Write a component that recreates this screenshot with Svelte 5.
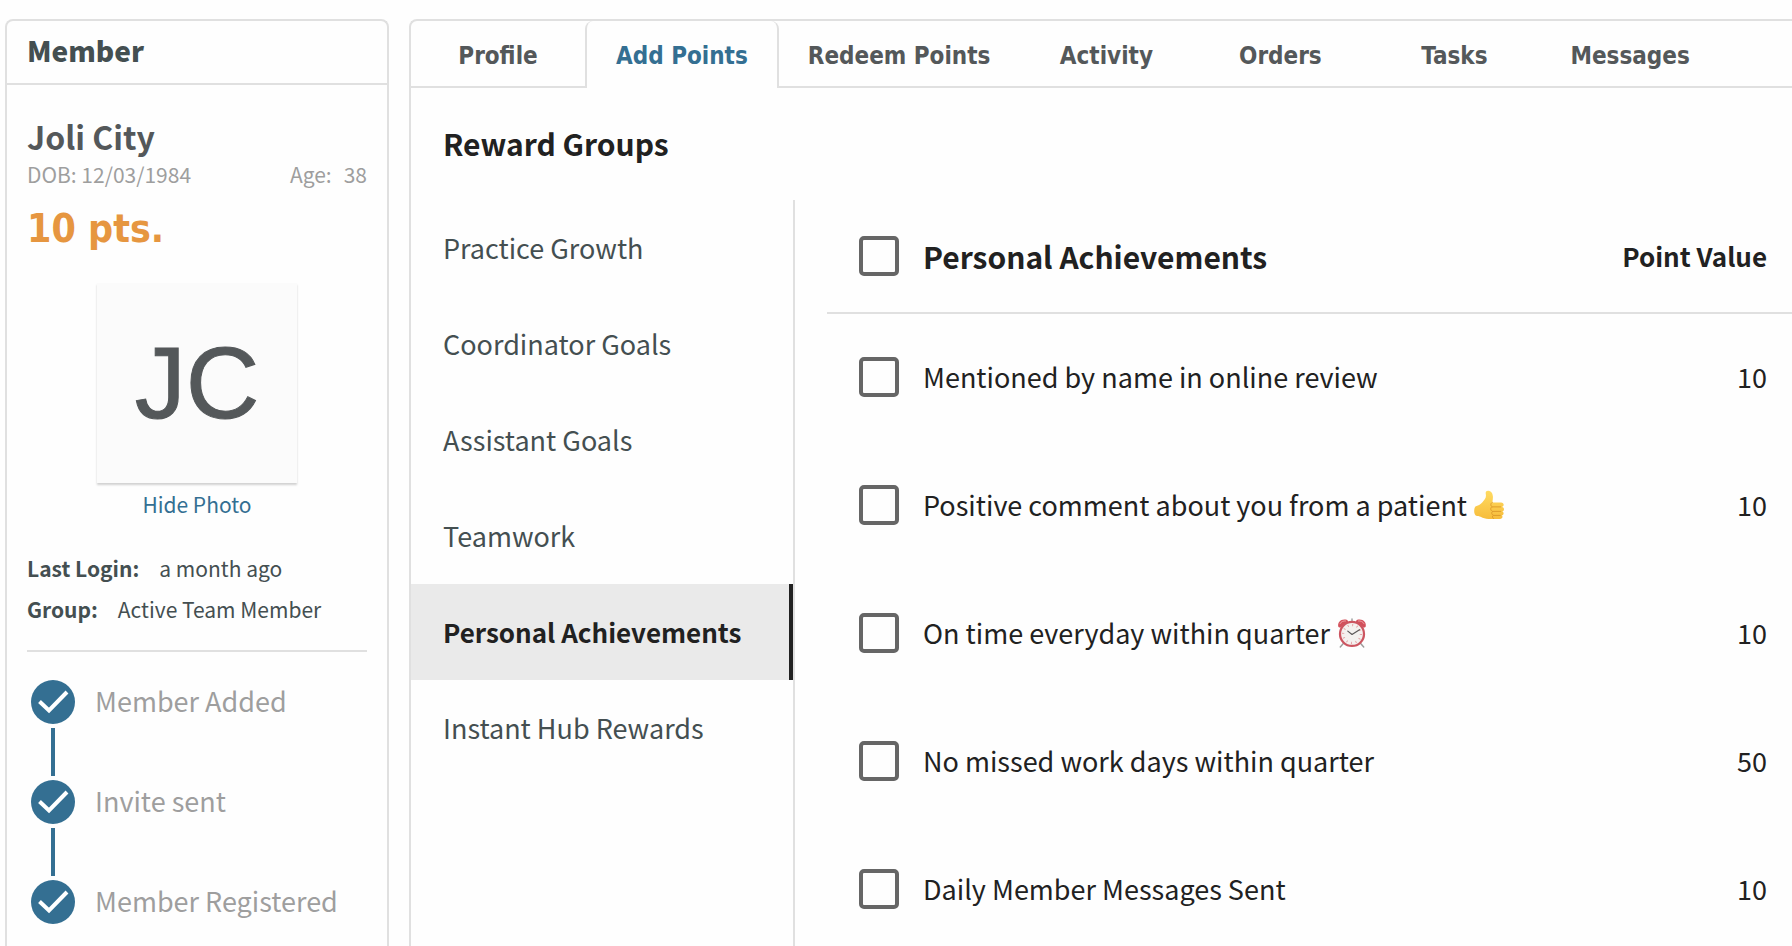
<script>
  const tabs = ['Profile', 'Add Points', 'Redeem Points', 'Activity', 'Orders', 'Tasks', 'Messages'];
  const groups = [
    'Practice Growth',
    'Coordinator Goals',
    'Assistant Goals',
    'Teamwork',
    'Personal Achievements',
    'Instant Hub Rewards'
  ];
  const steps = ['Member Added', 'Invite sent', 'Member Registered'];
  const rewards = [
    { name: 'Mentioned by name in online review', points: 10 },
    { name: 'Positive comment about you from a patient', points: 10, icon: 'thumb' },
    { name: 'On time everyday within quarter', points: 10, icon: 'clock' },
    { name: 'No missed work days within quarter', points: 50 },
    { name: 'Daily Member Messages Sent', points: 10 }
  ];

  let activeTab = $state('Add Points');
  let activeGroup = $state('Personal Achievements');
  let checked = $state([false, false, false, false, false]);
  let all = $derived(checked.every(Boolean));

  function toggleAll(event) {
    checked = checked.map(() => event.currentTarget.checked);
  }
</script>

<div class="layout">
  <aside class="member">
    <h2>Member</h2>
    <div class="body">
      <h1>Joli City</h1>
      <div class="facts"><span>DOB: 12/03/1984</span><span class="age"><span>Age:</span><span>38</span></span></div>
      <p class="points">10 pts.</p>
      <div class="photo">JC</div>
      <button class="hide" type="button">Hide Photo</button>
      <dl>
        <div><dt>Last Login:</dt><dd>a month ago</dd></div>
        <div><dt>Group:</dt><dd>Active Team Member</dd></div>
      </dl>
      <ol>
        {#each steps as step}
          <li>
            <svg viewBox="0 0 44 44" aria-hidden="true">
              <circle cx="22" cy="22" r="22" />
              <path d="M8.500 21.500 18 30.500 36 12" />
            </svg>
            <span>{step}</span>
          </li>
        {/each}
      </ol>
    </div>
  </aside>

  <main>
    <nav>
      {#each tabs as tab}
        <button type="button" class:active={tab === activeTab} onclick={() => (activeTab = tab)}>{tab}</button>
      {/each}
    </nav>
    <h3>Reward Groups</h3>
    <div class="split">
      <div class="groups">
        {#each groups as group}
          <button type="button" class:active={group === activeGroup} onclick={() => (activeGroup = group)}>{group}</button>
        {/each}
      </div>
      <table>
        <thead>
          <tr>
            <th class="tick"><input id="all" type="checkbox" checked={all} onchange={toggleAll} /></th>
            <th class="title"><label for="all">Personal Achievements</label></th>
            <th class="value">Point Value</th>
          </tr>
        </thead>
        <tbody>
          {#each rewards as reward, i}
            <tr>
              <td class="tick"><input id="reward-{i}" type="checkbox" bind:checked={checked[i]} /></td>
              <td>
                <label for="reward-{i}">
                  <span>{reward.name}</span>
                  {#if reward.icon === 'thumb'}
                    <svg class="emoji" viewBox="0 0 32 32" aria-hidden="true">
                      <defs>
                        <linearGradient id="skin" x1="0" y1="0" x2="0" y2="1">
                          <stop offset="0" stop-color="#ffdb62" />
                          <stop offset="1" stop-color="#f7bd3c" />
                        </linearGradient>
                      </defs>
                      <path fill="url(#skin)" d="M1.500 17.500C4 16.500 7 15.500 9 13c2.500-3 4.300-4.800 3.600-8.500C12 1.800 13.300.5 15.300.7c3.500.3 4.900 3.600 4.900 6.800 0 2-.3 4-.7 5.700h9.300c3.500 0 3.700 4.200 1 4.800 3 .4 2.800 4.400.2 4.800 2.400.6 2 4-.5 4.300 1.600.8 1 3.700-1.500 3.700H15.500c-3.500 0-5.500-.8-8.500-2.300-2.500-.6-4.300-.4-5.500-1.500C-.5 24.500 0 19.500 1.500 17.500Z" />
                      <path fill="none" stroke="#dc9a2a" stroke-width="1" stroke-linecap="round" d="M19.500 13.200c-2 .8-2.200 3.600-.3 4.700M28.300 18h-9c-2 .5-2 4 .2 4.700M28.500 22.800h-8.500c-1.700.6-1.500 3.600.5 4.200M28 27.100h-7.500c-1.200.5-1 2.600.2 3.400" />
                    </svg>
                  {:else if reward.icon === 'clock'}
                    <svg class="emoji" viewBox="0 0 32 32" aria-hidden="true">
                      <path stroke="#9b9b9b" stroke-width="1.500" stroke-linecap="round" d="M7 27l-3.500 4M25 27l3.500 4M16 1v3" />
                      <path fill="#d3505b" d="M1.500 9.500C0 4 5 0 11 2l1 2-8.500 6.500ZM30.500 9.500C32 4 27 0 21 2l-1 2 8.500 6.500Z" />
                      <path stroke="#eda0a5" stroke-width="1" fill="none" d="M3 6.500C4 4 7 2.800 9.500 3.200M29 6.500C28 4 25 2.800 22.500 3.200" />
                      <circle cx="16" cy="17" r="12.800" fill="#f4f1ef" stroke="#cc5560" stroke-width="2.400" />
                      <circle cx="16" cy="17" r="9.500" fill="none" stroke="#e3a0a3" stroke-width="2.400" stroke-dasharray="1 3.970" />
                      <path fill="none" stroke="#5b5858" stroke-width="1.300" stroke-linecap="round" stroke-linejoin="round" d="M11.500 14 16 17.500 24 12.500" />
                    </svg>
                  {/if}
                </label>
              </td>
              <td class="value">{reward.points}</td>
            </tr>
          {/each}
        </tbody>
      </table>
    </div>
  </main>
</div>

<style>
  :global(body) {
    background: #fefefe;
    font-family: 'Source Sans Pro', 'Noto Sans CJK SC', sans-serif;
    font-size: 27px;
    color: #212121;
  }
  * {
    box-sizing: border-box;
    margin: 0;
    padding: 0;
  }
  button {
    background: none;
    border: 0;
    font: inherit;
    color: inherit;
    cursor: pointer;
  }
  .layout {
    display: flex;
    gap: 20px;
    min-height: 100vh;
    padding: 19px 0 0 5px;
  }
  .member {
    flex: 0 0 384px;
    border: 2px solid #e0e0e0;
    border-bottom: 0;
    border-radius: 8px 8px 0 0;
    color: #444f51;
  }
  h2 {
    padding: 0 20px 4px;
    border-bottom: 2px solid #e0e0e0;
    font-size: 28px;
    font-weight: 900;
    line-height: 58px;
  }
  .body {
    display: flex;
    flex-direction: column;
    padding: 31px 20px 0;
    font-size: 21px;
  }
  h1 {
    color: #54585a;
    font-size: 32px;
    line-height: 40px;
  }
  .facts {
    display: flex;
    justify-content: space-between;
    color: #9e9e9e;
    line-height: 36px;
  }
  .age {
    display: flex;
    gap: 12px;
  }
  .points {
    margin-top: 13px;
    color: #e69640;
    font-family: Tahoma, 'DejaVu Sans Condensed', 'DejaVu Sans', sans-serif;
    font-stretch: condensed;
    font-size: 39px;
    font-weight: 700;
    line-height: 48px;
  }
  .photo {
    display: grid;
    place-items: center;
    align-self: center;
    width: 200px;
    height: 200px;
    margin-top: 30px;
    background: #fbfbfb;
    box-shadow: 0 2px 2px rgba(0, 0, 0, 0.18);
    color: #54585a;
    font: 102px 'Liberation Sans', sans-serif;
    -webkit-text-stroke: 1px #54585a;
  }
  .hide {
    align-self: center;
    margin-top: 5px;
    color: #346f92;
    line-height: 32px;
  }
  dl {
    margin-top: 28px;
    padding-bottom: 20px;
    border-bottom: 2px solid #e0e0e0;
    line-height: 41px;
  }
  dl div {
    display: flex;
    gap: 20px;
  }
  dt {
    font-weight: 700;
  }
  ol {
    margin-top: 28px;
    list-style: none;
    color: #9e9e9e;
    font-size: 27px;
    line-height: 42px;
  }
  li {
    display: grid;
    grid-template-columns: 44px 1fr;
    column-gap: 20px;
    padding-left: 4px;
  }
  li svg {
    width: 44px;
    height: 44px;
  }
  li circle {
    fill: #346f92;
  }
  li path {
    fill: none;
    stroke: #fff;
    stroke-width: 4;
  }
  li:not(:last-child)::after {
    content: '';
    justify-self: center;
    width: 4px;
    height: 48px;
    margin: 4px 0;
    background: #346f92;
  }
  main {
    flex: 1;
    min-width: 0;
    display: flex;
    flex-direction: column;
    border: solid #e0e0e0;
    border-width: 2px 0 0 2px;
    border-radius: 8px 0 0 0;
  }
  nav {
    display: flex;
    color: #54585a;
    font-family: Tahoma, 'DejaVu Sans Condensed', 'DejaVu Sans', sans-serif;
    font-stretch: condensed;
    font-size: 24px;
    line-height: 60px;
  }
  nav::after {
    content: '';
    flex: 1;
    border-bottom: 2px solid #e0e0e0;
  }
  nav button {
    min-width: 174px;
    padding: 5px 29px 0;
    border-bottom: 2px solid #e0e0e0;
    font-weight: 700;
    white-space: nowrap;
  }
  nav button.active {
    padding-bottom: 2px;
    border: 2px solid #e0e0e0;
    border-width: 0 2px;
    border-radius: 8px 8px 0 0;
    color: #346f92;
  }
  h3 {
    margin: 33px 32px 35px;
    font-size: 30px;
    font-weight: 600;
    line-height: 44px;
  }
  .split {
    flex: 1;
    display: flex;
    align-items: flex-start;
    gap: 32px;
  }
  .groups {
    flex: 0 0 384px;
    align-self: stretch;
    border-right: 2px solid #e0e0e0;
    color: #444f51;
  }
  .groups button {
    display: block;
    width: 100%;
    padding: 0 32px;
    line-height: 96px;
    text-align: left;
    white-space: nowrap;
  }
  .groups .active {
    padding-right: 28px;
    border-right: 4px solid #212121;
    background: #eaeaea;
    color: #212121;
    font-size: 26px;
    font-weight: 600;
  }
  table {
    flex: 1;
    border-spacing: 0;
    line-height: 40px;
    text-align: left;
  }
  th {
    height: 114px;
    border-bottom: 2px solid #e0e0e0;
    font-size: 26px;
    font-weight: 600;
  }
  td {
    height: 128px;
    padding-bottom: 2px;
  }
  .title {
    font-size: 30px;
  }
  .tick {
    width: 96px;
    padding-left: 32px;
  }
  .value {
    padding-right: 25px;
    text-align: right;
  }
  label {
    display: flex;
    align-items: center;
    gap: 7px;
  }
  input {
    display: block;
    width: 40px;
    height: 40px;
    appearance: none;
    border: 4px solid #666;
    border-radius: 5px;
  }
  input:checked {
    background: #346f92;
  }
  .emoji {
    width: 30px;
    height: 30px;
  }
</style>
